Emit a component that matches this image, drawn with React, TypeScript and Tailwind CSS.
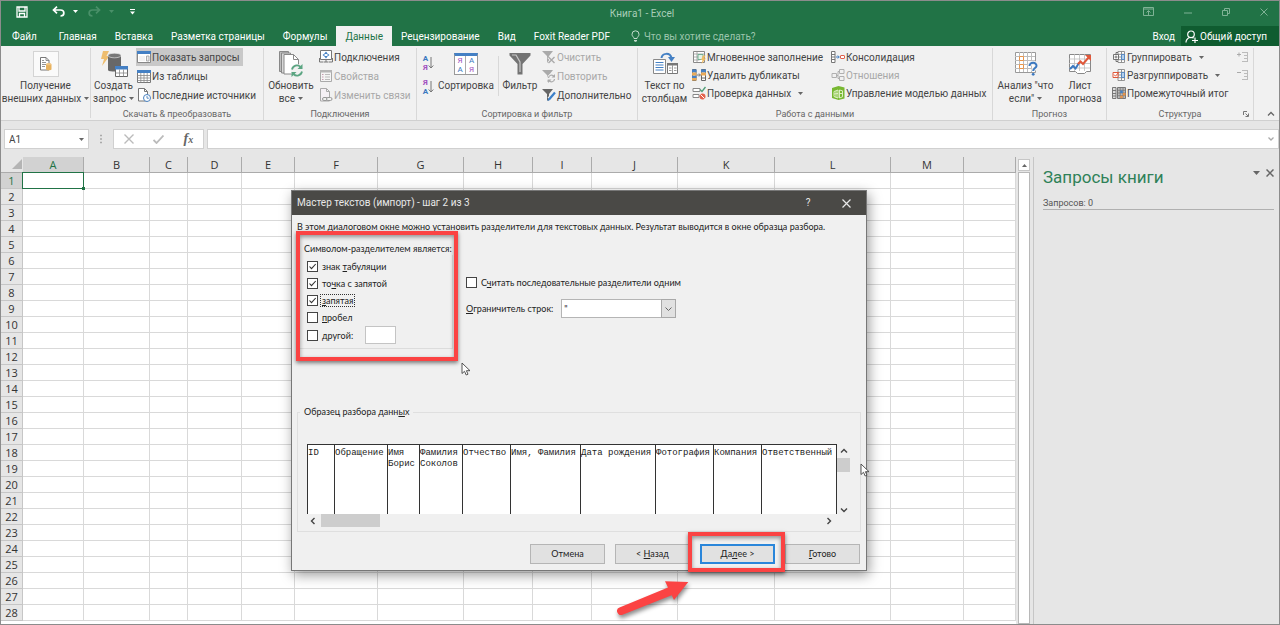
import type { ReactNode } from "react";

const UI = "font-['Roboto','Open_Sans',sans-serif]";

/* ---------- shared pieces ---------- */

function Caret({ className = "text-[#666]" }: { className?: string }) {
  return (
    <svg viewBox="0 0 5 3" className={`h-[3px] w-[5px] shrink-0 ${className}`} aria-hidden="true">
      <path d="M0 0h5L2.500 3z" fill="currentColor" />
    </svg>
  );
}

function Icon({ children, box = "0 0 14 14", className = "h-3.5 w-3.5" }: { children: ReactNode; box?: string; className?: string }) {
  return (
    <svg viewBox={box} className={`shrink-0 ${className}`} fill="none" aria-hidden="true">
      {children}
    </svg>
  );
}

function Small({ icon, children, caret, disabled, active }: { icon: ReactNode; children: ReactNode; caret?: boolean; disabled?: boolean; active?: boolean }) {
  return (
    <button
      type="button"
      disabled={disabled}
      className={`flex h-[18px] items-center gap-px px-px text-[10px] whitespace-nowrap ${active ? "bg-[#c8c8c8] pr-1" : ""} ${disabled ? "text-[#a8a8a8]" : "text-[#444]"}`}
    >
      {icon}
      <span>{children}</span>
      {caret && <span className="pl-1.5"><Caret /></span>}
    </button>
  );
}

function Big({ icon, line1, line2, caret, className }: { icon: ReactNode; line1: string; line2?: string; caret?: boolean; className: string }) {
  return (
    <button type="button" className={`flex shrink-0 flex-col items-center text-[10px] leading-[13px] whitespace-nowrap text-[#444] ${className}`}>
      <span className="flex h-[31px] items-center">{icon}</span>
      <span>{line1}</span>
      {line2 && (
        <span className="flex items-center gap-[3px]">
          {line2}
          {caret && <Caret />}
        </span>
      )}
    </button>
  );
}

function Group({ label, children, className }: { label?: string; children: ReactNode; className: string }) {
  return (
    <section className={`flex shrink-0 flex-col py-0.5 ${className}`}>
      <div className="flex flex-1 flex-col border-r border-[#d8d8d8]">
        <div className="flex h-[60px] items-start">{children}</div>
        {label && <h2 className="text-center text-[9px] leading-3 text-[#666]">{label}</h2>}
      </div>
    </section>
  );
}

/* ---------- ribbon icons ---------- */

const ExternalData = () => (
  <span className="flex h-[26px] w-[26px] items-center justify-center border border-[#d4d4d4] bg-[#fafafa]">
    <Icon box="0 0 12 14" className="h-3.5 w-3">
      <path d="M.5.5h5.500l3 3v9.500H.5z" fill="#fff" stroke="#777" />
      <path d="M6 .5v3h3M2 5.500h4M2 7.500h4M2 9.500h3M2 3.500h2" stroke="#777" strokeWidth=".8" />
      <path d="M6 7.300v5c0 1.300 5.500 1.300 5.500 0v-5" fill="#e8b25e" />
      <ellipse cx="8.750" cy="7.200" rx="2.750" ry="1.100" fill="#f0c480" />
    </Icon>
  </span>
);

const NewQuery = () => (
  <Icon box="0 0 28 28" className="h-7 w-7">
    <path d="M3 1h6L6.500 6H9.500L2 16l2-7H1z" fill="#eebd6e" />
    <path d="M8 6v14c0 2 13 2 13 0V6" fill="#686868" />
    <ellipse cx="14.500" cy="5.500" rx="6.500" ry="2.300" fill="#777" stroke="#eee" strokeWidth=".6" />
    <path d="M15.500 16.500h12v10h-12z" fill="#fff" stroke="#666" />
    <path d="M15 16h13v3.500H15z" fill="#4480c4" />
    <path d="M15.500 23h12M19.500 19.500v7M23.500 19.500v7" stroke="#888" strokeWidth=".8" />
  </Icon>
);

const ShowQueries = () => (
  <Icon>
    <path d="M.5 1.500h13v11H.5z" fill="#fff" stroke="#888" />
    <path d="M0 1h14v3H0z" fill="#4480c4" />
    <path d="M9.500 6h2.500v5H9.500z" fill="#eee" stroke="#999" strokeWidth=".8" />
    <path d="M2 6h6v5H2z" fill="#f3f3f3" />
  </Icon>
);

const FromTable = () => (
  <Icon>
    <path d="M.5 1.500h13v12H.5z" fill="#fff" stroke="#777" />
    <path d="M0 1h14v3H0z" fill="#4480c4" />
    <path d="M.5 6.500h13M.5 9h13M.5 11.500h13M3.800 4v9.500M7 4v9.500M10.200 4v9.500" stroke="#888" strokeWidth=".8" />
  </Icon>
);

const Recent = () => (
  <Icon>
    <path d="M1.500.5h6l3 3v9.500h-9z" fill="#fff" stroke="#777" />
    <path d="M7.500.5v3h3" stroke="#777" />
    <circle cx="10" cy="10" r="3.500" fill="#fff" stroke="#4a82c0" />
    <path d="M10 8v2.200h1.800" stroke="#4a82c0" strokeWidth=".9" />
  </Icon>
);

const Refresh = () => (
  <Icon box="0 0 26 28" className="h-7 w-[26px]">
    <path d="M1.500 1.500h9v20h-9z" fill="#bdbdbd" stroke="#888" />
    <path d="M3.500 3h9v20h-9z" fill="#d8d8d8" stroke="#888" />
    <path d="M6 4.500h9.500l5 5V24H6z" fill="#fff" stroke="#888" />
    <path d="M15.500 4.500v5h5" stroke="#888" />
    <circle cx="19" cy="20.500" r="6.500" fill="#f1f1f1" />
    <path d="M14 19.500a5 5 0 0 1 8.500-2.500M24 21.500a5 5 0 0 1-8.500 2.500" stroke="#5ba582" strokeWidth="1.800" />
    <path d="M24.500 14v5h-5zM13.500 27v-5h5z" fill="#5ba582" />
  </Icon>
);

const Connections = () => (
  <Icon>
    <path d="M1.500.5h11v9h-11z" fill="#fff" stroke="#777" />
    <path d="M7 1.500 9 4H5zM7 8.500 5 6h4zM3.500 5l2-1.500v3zM10.500 5l-2-1.500v3z" fill="#4480c4" />
    <path d="M.5 8v4h4M13.500 8v4h-4M5 12h4M7 10v2" stroke="#777" />
  </Icon>
);

const Props = () => (
  <Icon>
    <path d="M1.500 1.500h11v11h-11z" fill="#f4f4f4" stroke="#aaa" />
    <path d="M1 1h12v2.500H1z" fill="#b5b5b5" />
    <path d="M3 5.500h1.500M3 8h1.500M3 10.500h1.500" stroke="#c79bb0" />
    <path d="M6 5.500h5M6 8h5M6 10.500h5" stroke="#bbb" />
  </Icon>
);

const EditLinks = () => (
  <Icon>
    <path d="M1.500.5h6l3 3v9.500h-9z" fill="#f6f1f6" stroke="#aaa" />
    <path d="M7.500.5v3h3" stroke="#aaa" />
    <rect x="3.500" y="9.500" width="5" height="3" rx="1.500" fill="#f1f1f1" stroke="#999" />
    <rect x="7.500" y="9.500" width="5.500" height="3" rx="1.500" fill="#f1f1f1" stroke="#999" />
  </Icon>
);

function SortLetters({ top, bottom, topColor, bottomColor }: { top: string; bottom: string; topColor: string; bottomColor: string }) {
  return (
    <button type="button" className="flex items-center text-[8px] leading-[9px] font-bold" aria-label={`${top}${bottom}`}>
      <span className="flex flex-col">
        <span className={topColor}>{top}</span>
        <span className={bottomColor}>{bottom}</span>
      </span>
      <Icon box="0 0 6 14" className="h-3.5 w-1.5">
        <path d="M3 1v11M.7 9.500 3 12l2.300-2.500" stroke="#777" />
      </Icon>
    </button>
  );
}

const SortDialog = () => (
  <span className="grid h-[22px] w-6 grid-cols-2 border border-[#999] border-t-[3px] border-t-[#4480c4] bg-white text-center text-[8px] leading-[9px]">
    <span className="border-r border-[#aaa] text-[#a050c0]">Я</span>
    <span className="text-[#3b78c0]">А</span>
    <span className="border-r border-[#aaa] text-[#3b78c0]">А</span>
    <span className="text-[#a050c0]">Я</span>
  </span>
);

const Filter = () => (
  <Icon box="0 0 22 23" className="h-[23px] w-[22px]">
    <path d="M.5 1h21v2.500L13.500 12v10.500h-5V12L.5 3.500z" fill="#737373" />
    <path d="M3 3h4l4 7v10" stroke="#c8c8c8" strokeWidth="1.200" />
  </Icon>
);

const ClearFilter = () => (
  <Icon>
    <path d="M0 1h11L7 6v6.500H5V6z" fill="#aaa" />
    <path d="M6.500 7l6 6M12.500 7l-6 6" stroke="#f1f1f1" strokeWidth="3" />
    <path d="M6.500 7l6 6M12.500 7l-6 6" stroke="#aaa" strokeWidth="1.400" />
  </Icon>
);

const Reapply = () => (
  <Icon>
    <path d="M0 1h11L7 6v6.500H5V6z" fill="#aaa" />
    <circle cx="9.500" cy="9.500" r="4.500" fill="#f1f1f1" />
    <path d="M6.500 9a3 3 0 0 1 5.500-1.500M12.500 10a3 3 0 0 1-5.500 1.500" stroke="#aaa" strokeWidth="1.200" />
    <path d="M13 5v3.500H9.500zM6 14v-3.500h3.500z" fill="#aaa" />
  </Icon>
);

const Advanced = () => (
  <Icon>
    <path d="M0 1h11L7 6v6.500H5V6z" fill="#666" />
    <path d="m13 4-6 7" stroke="#f1f1f1" strokeWidth="4" />
    <path d="m13 4.500-6 7" stroke="#3b7fc8" strokeWidth="2.200" />
    <path d="m5.500 13 .8-2.500 1.700 1.400z" fill="#3b7fc8" />
  </Icon>
);

const TextToColumns = () => (
  <Icon box="0 0 26 24" className="h-6 w-[26px]">
    <path d="M1.500 7.500h12v14h-12z" fill="#fff" stroke="#888" />
    <path d="M3.500 10.500h8M3.500 13h8M3.500 15.500h8M3.500 18h8" stroke="#4480c4" />
    <path d="M15.500 11.500h10v10h-10z" fill="#fff" stroke="#777" />
    <path d="M15 11h11v2.500H15z" fill="#777" />
    <path d="M20.500 13v8M17 16h2.500M17 18.500h2.500M22 16h2.500M22 18.500h2.500" stroke="#999" />
    <path d="M9.500 6C10 1 18 0 19.500 6" stroke="#4480c4" strokeWidth="2" />
    <path d="M16 5h7l-3.500 5z" fill="#4480c4" />
  </Icon>
);

const FlashFill = () => (
  <Icon>
    <path d="M1.500 1.500h11v11h-11z" fill="#fff" stroke="#888" />
    <path d="M1.500 4h11M1.500 7h7M1.500 10h6M5 1.500v11" stroke="#999" strokeWidth=".8" />
    <path d="M6 4.500h5v5H6z" fill="#e4f1e8" stroke="#5ba582" strokeWidth=".8" />
    <path d="M11 5.500h2.500L12 8.500h2L9.500 14l1-4H9z" fill="#f0bc62" />
  </Icon>
);

const RemoveDup = () => (
  <Icon>
    <path d="M.5 1.500H4v11H.5zM9.500 1.500h4v11h-4z" fill="#fff" stroke="#666" />
    <path d="M0 1.500h4.500v3H0zM0 7.500h4.500v2.500H0z" fill="#4480c4" />
    <path d="M0 4.500h4.500v3H0zM0 10h4.500v2.500H0z" fill="#e8a958" />
    <path d="M9 1.500h5v3H9z" fill="#4480c4" />
    <path d="M9 4.500h5v3H9z" fill="#e8a958" />
    <path d="M9.500 10h4" stroke="#666" />
    <path d="M5 7h3M7 5.500 8.500 7 7 8.500" stroke="#555" strokeWidth=".8" />
  </Icon>
);

const Validation = () => (
  <Icon>
    <path d="M1 2.500h7v3H1zM1 8.500h6v3H1z" fill="#fff" stroke="#888" />
    <path d="m8 3.500 2 2 3.500-4.500" stroke="#4e9d78" strokeWidth="1.400" />
    <circle cx="10.500" cy="10.500" r="3" fill="#e4624c" />
    <path d="m8.500 8.500 4 4" stroke="#fff" />
  </Icon>
);

const Consolidate = () => (
  <Icon>
    <path d="M.5 1.500H4v11H.5zM.5 4.500H4M.5 7H4M.5 9.500H4" fill="#fff" stroke="#777" />
    <path d="M5 7h3M6.800 5.500 8.300 7 6.800 8.500" stroke="#3b78c0" />
    <rect x="9.500" y="5.500" width="4" height="3" rx=".5" fill="#fff" stroke="#e0604c" />
  </Icon>
);

const Relations = () => (
  <Icon>
    <path d="M1 5.500h4.500v4H1zM8.500 1.500H13v4H8.500zM8.500 8.500H13v4H8.500zM5.500 7.500H7M8.500 3.500H7v7h1.500" stroke="#b0b0b0" />
  </Icon>
);

const DataModel = () => (
  <Icon>
    <path d="M1 2 7.500 0 13.500 1.500v11L7.500 14 1 12z" fill="#78b832" />
    <path d="M3 5.500 7 4v8l-4-1.500zM3 8l4-.5M8.500 4l3 .8v6l-3 1.200zM8.500 7.500h3M5 5v6.500" stroke="#e6f5d0" strokeWidth=".9" />
  </Icon>
);

const WhatIf = () => (
  <Icon box="0 0 24 25" className="h-[25px] w-6">
    <path d="M1.500 1.500h20v20h-20z" fill="#fff" stroke="#999" />
    <path d="M1 5.500h20M1 9.500h20M1 13.500h20M1 17.500h20M5.500 1v20M9.500 1v20M13.500 1v20M17.500 1v20" stroke="#bdbdbd" />
    <path d="M5.500 5.500h4v4h-4zM5.500 13.500h4v4h-4z" fill="#fff" stroke="#e8944a" />
    <path d="M15.500 15c0-4.500 7.500-4 7 0-.2 2.200-3.300 2-3.300 5" stroke="#f1f1f1" strokeWidth="4" />
    <path d="M15.500 15c0-4.500 7.500-4 7 0-.2 2.200-3.300 2-3.300 5" stroke="#3b78c0" strokeWidth="2" />
    <circle cx="19.200" cy="23.300" r="1.400" fill="#3b78c0" />
  </Icon>
);

const Forecast = () => (
  <Icon box="0 0 24 22" className="h-[22px] w-6">
    <path d="M1.500 1.500h21v17h-4l-2 2h-7l-2-2h-6z" fill="#fff" stroke="#888" />
    <path d="M1 6h21M1 10.500h21M1 15h21M6.500 1v17M11.500 1v17M16.500 1v17" stroke="#bbb" strokeWidth=".8" />
    <path d="m2 16 3-3 2.500 2.500L11 10" stroke="#3b78c0" strokeWidth="2" />
    <path d="m10 11 2.500-2.500L15 11l6-7" stroke="#e0583a" strokeWidth="2" />
    <path d="M17 2h6v6z" fill="#e0583a" />
  </Icon>
);

function GroupIcon({ mark }: { mark: "add" | "remove" }) {
  return (
    <Icon>
      <path d="M6 1.500h6.500v11H6zM6 4.300h6.500M6 7h6.500M6 9.700h6.500M9.500 1.500v11" fill="#fff" stroke="#888" strokeWidth=".9" />
      <path d="M9.500 4.500h3v5h-3z" fill="#b6cfe8" stroke="#4480c4" strokeWidth=".8" />
      {mark === "add" ? (
        <path d="M4 2.500H6M4 11.500H6M4 2.500v2M4 9v2.500M1.500 4.500h5v5h-5zM2.500 7h3M4 5.500v3" fill="#fff" stroke="#666" strokeWidth=".9" />
      ) : (
        <>
          <path d="M1 4.500h5v5H1z" fill="#fff" stroke="#e0583a" />
          <path d="m2 6.500 1.500 1.700L7 4" stroke="#e0583a" />
        </>
      )}
    </Icon>
  );
}

const Subtotal = () => (
  <Icon>
    <path d="M.5 1.500H4v11H.5z" fill="#ddd" stroke="#777" />
    <path d="M.5 4.500H4M.5 7.500H4M.5 10H4" stroke="#777" />
    <path d="M5.500 1.500h8v11h-8z" fill="#bbb" stroke="#777" />
    <path d="M5.500 4.300h8M5.500 7h8M5.500 9.700h8M8.200 1.500v11M11 1.500v11" stroke="#777" strokeWidth=".8" />
    <path d="M8.200 4.500h2.500V7H8.200z" fill="#4480c4" />
    <path d="M11 7h2.500v2.500H11zM8.200 9.700h2.500v2.500H8.200z" fill="#e8944a" />
  </Icon>
);

function Detail({ plus }: { plus?: boolean }) {
  return (
    <Icon box="0 0 12 12" className="h-3 w-3">
      <path d={plus ? "M0 3.500h4M2 1.500v4" : "M0 3.500h4"} stroke="#aaa" />
      <path d="M5 1.500h6M7 4.500h4M7 7.500h4M5 10.500h6M10.500 1v10" stroke="#bbb" />
    </Icon>
  );
}

/* ---------- window chrome ---------- */

function TitleBar() {
  return (
    <header className="flex h-[25px] items-center bg-[#217346] text-white">
      <div className="flex flex-1 items-center pb-1 pl-[15px]">
        <button type="button" aria-label="Сохранить">
          <Icon box="0 0 12 12" className="h-3 w-3">
            <path d="M1 1h10v10H1zM3 1v4h6V1M3.500 11V7.500h5V11" stroke="#fff" strokeWidth="1.300" />
          </Icon>
        </button>
        <button type="button" aria-label="Отменить" className="ml-6 flex items-center gap-2">
          <Icon box="0 0 13 11" className="h-[11px] w-[13px]">
            <path d="M2 4h6.500c4.500 0 4.500 6 0 6M5 .7 1.500 4 5 7.300" stroke="#fff" strokeWidth="1.700" />
          </Icon>
          <Caret className="text-white" />
        </button>
        <button type="button" aria-label="Вернуть" disabled className="ml-2.5 flex items-center gap-2">
          <Icon box="0 0 13 11" className="h-[11px] w-[13px]">
            <path d="M11 4H4.500C0 4 0 10 4.500 10M8 .7 11.500 4 8 7.300" stroke="#4a9069" strokeWidth="1.700" />
          </Icon>
          <Caret className="text-[#4a9069]" />
        </button>
        <button type="button" aria-label="Настройка панели" className="ml-4">
          <Icon box="0 0 5 6" className="h-1.5 w-[5px]">
            <path d="M0 .5h5" stroke="#fff" />
            <path d="M0 2.500h5L2.500 5.500z" fill="#fff" />
          </Icon>
        </button>
      </div>
      <h1 className="text-[10px] text-[#a9cdb8]">Книга1 - Excel</h1>
      <div className="flex flex-1 items-center justify-end gap-[30px] pr-[11px] pb-1 text-[#7fb295]">
        <button type="button" aria-label="Параметры ленты">
          <Icon box="0 0 11 9" className="h-[9px] w-[11px]">
            <path d="M.5.5h10v8H.5zM.5 2h10M5.500 8V4M3.500 5.500l2-2 2 2" stroke="currentColor" />
          </Icon>
        </button>
        <button type="button" aria-label="Свернуть">
          <Icon box="0 0 8 9" className="h-[9px] w-2">
            <path d="M0 6h8" stroke="currentColor" />
          </Icon>
        </button>
        <button type="button" aria-label="Восстановить">
          <Icon box="0 0 8 8" className="h-2 w-2">
            <path d="M.5 2.500h5v5h-5zM2.500 2.500v-2h5v5h-2" stroke="currentColor" />
          </Icon>
        </button>
        <button type="button" aria-label="Закрыть">
          <Icon box="0 0 8 8" className="h-2 w-2">
            <path d="m.5.5 7 7M7.500.5l-7 7" stroke="currentColor" />
          </Icon>
        </button>
      </div>
    </header>
  );
}

const TABS = ["Файл", "Главная", "Вставка", "Разметка страницы", "Формулы", "Данные", "Рецензирование", "Вид", "Foxit Reader PDF"];

function Tabs() {
  return (
    <nav className="flex h-5 items-stretch bg-[#217346] text-[10px] whitespace-nowrap text-white">
      {TABS.map((t) => (
        <a
          key={t}
          href="#"
          className={`flex items-center px-[9px] ${t === "Данные" ? "bg-[#f1f1f1] text-[#217346]" : t === "Файл" ? "mr-1 ml-0.5" : ""}`}
        >
          {t}
        </a>
      ))}
      <button type="button" className="ml-3 flex items-center gap-1 text-[#9cc5ad]">
        <Icon box="0 0 9 12" className="h-3 w-[9px]">
          <path d="M3 8.500C3 7 1 6.500 1 4.300a3.500 3.500 0 0 1 7 0C8 6.500 6 7 6 8.500zM3 10.500h3M3.500 11.700h2" stroke="#c5ddcf" />
        </Icon>
        Что вы хотите сделать?
      </button>
      <div className="ml-auto flex">
        <button type="button" className="px-1.5">Вход</button>
        <button type="button" className="flex w-[98px] items-center gap-0.5 bg-[#0f5c30] pl-1">
          <Icon box="0 0 13 13" className="h-[13px] w-[13px]">
            <circle cx="6" cy="4.300" r="3.300" stroke="#fff" strokeWidth="1.200" />
            <path d="M1 12.500C1 10 2.500 8.500 4.500 7.500M7.500 7.500l1 .8M7 10.500h6M10 7.500v5.500" stroke="#fff" strokeWidth="1.200" />
          </Icon>
          Общий доступ
        </button>
      </div>
    </nav>
  );
}

function Ribbon() {
  return (
    <div className="flex h-[75px] border-b border-[#d0d0d0] bg-[#f1f1f1]">
      <Group className="w-[90px]">
        <Big className="w-full" icon={<ExternalData />} line1="Получение" line2="внешних данных" caret />
      </Group>
      <Group className="w-[173px]" label="Скачать & преобразовать">
        <Big className="w-[45px]" icon={<NewQuery />} line1="Создать" line2="запрос" caret />
        <div className="flex flex-col items-start gap-px">
          <Small active icon={<ShowQueries />}>Показать запросы</Small>
          <Small icon={<FromTable />}>Из таблицы</Small>
          <Small icon={<Recent />}>Последние источники</Small>
        </div>
      </Group>
      <Group className="w-[153px]" label="Подключения">
        <Big className="w-[54px]" icon={<Refresh />} line1="Обновить" line2="все" caret />
        <div className="flex flex-col items-start gap-px">
          <Small icon={<Connections />}>Подключения</Small>
          <Small disabled icon={<Props />}>Свойства</Small>
          <Small disabled icon={<EditLinks />}>Изменить связи</Small>
        </div>
      </Group>
      <Group className="w-[221px]" label="Сортировка и фильтр">
        <div className="flex w-[17px] flex-col items-end gap-1.5 pt-1.5">
          <SortLetters top="А" bottom="Я" topColor="text-[#3b78c0]" bottomColor="text-[#a050c0]" />
          <SortLetters top="Я" bottom="А" topColor="text-[#a050c0]" bottomColor="text-[#3b78c0]" />
        </div>
        <Big className="w-16" icon={<SortDialog />} line1="Сортировка" />
        <div className="mt-2 h-10 w-px bg-[#d8d8d8]" />
        <Big className="w-[42px]" icon={<Filter />} line1="Фильтр" />
        <div className="flex flex-col items-start gap-px">
          <Small disabled icon={<ClearFilter />}>Очистить</Small>
          <Small disabled icon={<Reapply />}>Повторить</Small>
          <Small icon={<Advanced />}>Дополнительно</Small>
        </div>
      </Group>
      <Group className="w-[355px]" label="Работа с данными">
        <Big className="w-[53px]" icon={<TextToColumns />} line1="Текст по" line2="столбцам" />
        <div className="flex w-[139px] flex-col items-start">
          <Small icon={<FlashFill />}>Мгновенное заполнение</Small>
          <Small icon={<RemoveDup />}>Удалить дубликаты</Small>
          <Small caret icon={<Validation />}>Проверка данных</Small>
        </div>
        <div className="flex flex-col items-start">
          <Small icon={<Consolidate />}>Консолидация</Small>
          <Small disabled icon={<Relations />}>Отношения</Small>
          <Small icon={<DataModel />}>Управление моделью данных</Small>
        </div>
      </Group>
      <Group className="w-[114px]" label="Прогноз">
        <Big className="w-[65px]" icon={<WhatIf />} line1={'Анализ "что'} line2={'если"'} caret />
        <Big className="w-11" icon={<Forecast />} line1="Лист" line2="прогноза" />
      </Group>
      <Group className="w-[147px]" label="Структура">
        <div className="flex flex-1 flex-col items-start pl-1">
          <Small caret icon={<GroupIcon mark="add" />}>Группировать</Small>
          <Small caret icon={<GroupIcon mark="remove" />}>Разгруппировать</Small>
          <Small icon={<Subtotal />}>Промежуточный итог</Small>
        </div>
        <div className="flex flex-col items-end gap-1.5 pt-[3px] pr-1">
          <Detail plus />
          <Detail />
          <button type="button" aria-label="Параметры структуры" className="mt-6">
            <Icon box="0 0 6 6" className="h-1.5 w-1.5">
              <path d="M.5 4V.5H4M2.500 2.500 5 5M5.500 2.500v3h-3" stroke="#777" />
            </Icon>
          </button>
        </div>
      </Group>
      <div className="flex flex-1 items-end justify-end pr-1 pb-1">
        <button type="button" aria-label="Свернуть ленту">
          <Icon box="0 0 8 5" className="h-[5px] w-2">
            <path d="m1 4.500 3-3 3 3" stroke="#666" strokeWidth="1.300" />
          </Icon>
        </button>
      </div>
    </div>
  );
}

function FormulaBar() {
  return (
    <div className="flex h-9 items-center bg-[#e6e6e6] pl-[3px] text-[10px] text-[#444]">
      <label className="flex h-5 w-[85px] items-center border border-[#d0d0d0] bg-white pr-1">
        <input aria-label="Имя" defaultValue="A1" className="min-w-0 flex-1 bg-transparent pl-1 outline-none" />
        <Caret />
      </label>
      <Icon box="0 0 2 10" className="mx-[11px] h-2.5 w-0.5">
        <path d="M0 1.500h2M0 5h2M0 8.500h2" stroke="#aaa" strokeWidth="1.500" />
      </Icon>
      <div className="flex h-5 w-[91px] items-center justify-around border border-[#d0d0d0] bg-white">
        <button type="button" aria-label="Отмена ввода">
          <Icon box="0 0 10 10" className="h-2.5 w-2.5"><path d="m.5.5 9 9M9.500.5l-9 9" stroke="#bbb" strokeWidth="1.400" /></Icon>
        </button>
        <button type="button" aria-label="Ввод">
          <Icon box="0 0 11 9" className="h-[9px] w-[11px]"><path d="m.5 5 3 3 7-7.500" stroke="#bbb" strokeWidth="1.800" /></Icon>
        </button>
        <button type="button" className="font-['Liberation_Serif',serif] text-[14px] leading-4 font-bold text-[#666] italic">
          f<span className="text-[10px]">x</span>
        </button>
      </div>
      <label className="ml-[3px] flex h-5 flex-1 items-center border border-[#d0d0d0] bg-white pr-1">
        <input aria-label="Строка формул" className="min-w-0 flex-1 outline-none" />
        <Icon box="0 0 6 4" className="h-1 w-1.5"><path d="m.5.5 2.500 2.500L5.500.5" stroke="#aaa" strokeWidth="1.300" /></Icon>
      </label>
    </div>
  );
}

const COLS: [string, string][] = [
  ["A", "w-[61px]"], ["B", "w-[66px]"], ["C", "w-[38px]"], ["D", "w-[54px]"], ["E", "w-[53px]"],
  ["F", "w-[83px]"], ["G", "w-[86px]"], ["H", "w-[69px]"], ["I", "w-[59px]"], ["J", "w-[86px]"],
  ["K", "w-[97px]"], ["L", "w-[116px]"], ["M", "w-[73px]"], ["", ""],
];
const ROWS = Array.from({ length: 28 }, (_, i) => i + 1);

function Sheet() {
  return (
    <table className="w-full table-fixed border-separate border-spacing-0 bg-white font-['Open_Sans','Noto_Sans',sans-serif] text-[11px] leading-[15px] text-[#333]">
      <colgroup>
        <col className="w-[22px]" />
        {COLS.map(([c, w]) => <col key={c} className={w} />)}
      </colgroup>
      <thead>
        <tr className="h-4">
          <th className="border-b border-[#ababab] bg-[#e6e6e6] p-0">
            <Icon box="0 0 11 11" className="ml-auto h-[11px] w-[11px]"><path d="M10 0v10H0z" fill="#b4b4b4" /></Icon>
          </th>
          {COLS.map(([c]) => (
            <th key={c} className={`border-r border-b border-[#ababab] p-0 font-normal ${c === "A" ? "bg-[#d2d2d2] text-[#217346]" : "bg-[#e6e6e6]"}`}>{c}</th>
          ))}
        </tr>
      </thead>
      <tbody>
        {ROWS.map((r) => (
          <tr key={r} className="h-4">
            <th className={`border-r border-b border-[#c6c6c6] p-0 font-normal ${r === 1 ? "bg-[#d2d2d2] text-[#217346]" : "bg-[#e6e6e6]"}`}>{r}</th>
            {COLS.map(([c]) => (
              <td key={c} className="border-r border-b border-[#d9d9d9] p-0">
                {r === 1 && c === "A" && (
                  <div className="relative h-[15px]">
                    <div className="absolute -inset-px border border-[#217346]" />
                    <div className="absolute -right-0.5 -bottom-0.5 h-[3px] w-[3px] bg-[#217346]" />
                  </div>
                )}
              </td>
            ))}
          </tr>
        ))}
      </tbody>
    </table>
  );
}

function QueriesPane() {
  return (
    <aside className="w-[246px] shrink-0 border-l border-[#c6c6c6] bg-[#e6e6e6] pt-2 pr-[5px] pl-[9px]">
      <div className="flex items-start">
        <h2 className="flex-1 text-[17px] leading-6 text-[#2f8158]">Запросы книги</h2>
        <button type="button" aria-label="Параметры области" className="pt-1.5">
          <Icon box="0 0 7 4" className="h-1 w-[7px]"><path d="M0 0h7L3.500 4z" fill="#666" /></Icon>
        </button>
        <button type="button" aria-label="Закрыть область" className="pt-1 pl-1.5">
          <Icon box="0 0 8 8" className="h-2 w-2"><path d="m.5.5 7 7M7.500.5l-7 7" stroke="#666" strokeWidth="1.500" /></Icon>
        </button>
      </div>
      <p className="mt-2 border-b border-[#b0b0b0] text-[9px] leading-3 text-[#555]">Запросов: 0</p>
    </aside>
  );
}

/* ---------- import wizard ---------- */

function Check({ id, checked, children, focus }: { id: string; checked?: boolean; children: ReactNode; focus?: boolean }) {
  return (
    <div className="flex h-[17px] items-center">
      <span className="relative flex">
        <input id={id} type="checkbox" defaultChecked={checked} className="peer h-[11px] w-[11px] appearance-none border border-[#444] bg-white" />
        <svg viewBox="0 0 11 11" className="pointer-events-none absolute inset-0 hidden h-[11px] w-[11px] peer-checked:block" fill="none">
          <path d="m2.500 5.500 2 2.200L8.700 3" stroke="#333" strokeWidth="1.100" />
        </svg>
      </span>
      <label htmlFor={id} className={`ml-0.5 border border-dotted px-px leading-[11px] ${focus ? "border-[#333]" : "border-transparent"}`}>{children}</label>
    </div>
  );
}

const PREVIEW: [string, string, string][] = [
  ["ID", "", "w-[27px]"], ["Обращение", "", "w-[53px]"], ["Имя", "Борис", "w-8"], ["Фамилия", "Соколов", "w-[43px]"],
  ["Отчество", "", "w-12"], ["Имя, Фамилия", "", "w-[70px]"], ["Дата рождения", "", "w-[75px]"], ["Фотография", "", "w-[58px]"],
  ["Компания", "", "w-12"], ["Ответственный", "", "w-[75px]"],
];

function Chevron({ d }: { d: string }) {
  return <Icon box="0 0 8 8" className="h-2 w-2"><path d={d} stroke="#444" strokeWidth="1.400" /></Icon>;
}

function DlgButton({ children, primary }: { children: ReactNode; primary?: boolean }) {
  return (
    <button type="button" className={`h-5 w-[75px] bg-[#e1e1e1] ${primary ? "border-2 border-[#2a86da]" : "border border-[#b5b5b5]"}`}>
      {children}
    </button>
  );
}

function Wizard() {
  return (
    <div role="dialog" aria-label="Мастер текстов (импорт)" className="absolute top-[190px] left-[291px] flex h-[381px] w-[576px] flex-col border border-[#777] bg-[#f0f0f0] font-['Lato','Roboto',sans-serif] text-[9px] leading-3 whitespace-nowrap text-[#222] shadow-[2px_4px_12px_rgba(0,0,0,0.4)]">
      <div className="flex h-6 shrink-0 items-center bg-[#4a4946] pl-[5px] font-['Roboto',sans-serif] text-[10px] text-[#e8e8e8]">
        <h2 className="flex-1">Мастер текстов (импорт) - шаг 2 из 3</h2>
        <button type="button" aria-label="Справка" className="w-8">?</button>
        <button type="button" aria-label="Закрыть" className="mr-[15px] ml-[18px]">
          <Icon box="0 0 9 9" className="h-[9px] w-[9px]"><path d="m.5.5 8 8M8.500.5l-8 8" stroke="#e8e8e8" strokeWidth="1.200" /></Icon>
        </button>
      </div>
      <p className="pt-1.5 pl-[5px]">В этом диалоговом окне можно установить разделители для текстовых данных. Результат выводится в окне образца разбора.</p>
      <div className="mt-2.5 flex">
        <fieldset className="ml-[5px] w-[156px] min-w-0 border border-[#dcdcdc] pb-1 pl-[9px]">
          <legend className="-ml-[7px] px-1">Символом-разделителем является:</legend>
          <div className="pt-[3px]">
            <Check id="tab" checked>знак <u>т</u>абуляции</Check>
            <Check id="semi" checked>то<u>ч</u>ка с запятой</Check>
            <Check id="comma" checked focus><u>з</u>апятая</Check>
            <Check id="space"><u>п</u>робел</Check>
            <div className="flex items-center">
              <Check id="other"><u>д</u>ругой:</Check>
              <input aria-label="Другой разделитель" className="ml-2.5 h-[18px] w-[31px] border border-[#c4c4c4] bg-white" />
            </div>
          </div>
        </fieldset>
        <div className="flex flex-col gap-2 pt-[31px] pl-[13px]">
          <Check id="merge">С<u>ч</u>итать последовательные разделители одним</Check>
          <div className="flex items-center gap-2">
            <label htmlFor="qualifier"><u>О</u>граничитель строк:</label>
            <span className="relative flex">
              <select id="qualifier" className="h-[19px] w-[115px] appearance-none border border-[#b5b5b5] bg-white pl-0.5">
                <option>"</option>
              </select>
              <span className="pointer-events-none absolute inset-y-0 right-0 flex w-[15px] items-center justify-center border border-[#a8a8a8] bg-[#e1e1e1]">
                <Icon box="0 0 7 4" className="h-1 w-[7px]"><path d="m.5.5 3 3 3-3" stroke="#666" /></Icon>
              </span>
            </span>
          </div>
        </div>
      </div>
      <fieldset className="mx-[5px] mt-auto border border-[#dfdfdf] pb-1 pl-[9px]">
        <legend className="-ml-[7px] px-1">Образец разбора данн<u>ы</u>х</legend>
        <div className="flex pt-[26px]">
          <table className="h-[70px] w-[530px] table-fixed border-collapse border-t border-[#333] bg-white font-['Liberation_Mono',monospace] leading-[11px]">
            <colgroup>
              {PREVIEW.map(([h, , w]) => <col key={h} className={w} />)}
            </colgroup>
            <tbody>
              <tr>
                {PREVIEW.map(([h, v]) => (
                  <td key={h} className="border-x border-[#333] p-0 pt-[3px] align-top">
                    {h}<br />{v}
                  </td>
                ))}
              </tr>
            </tbody>
          </table>
          <div className="flex w-[13px] flex-col items-center gap-[3px] pt-[3px]">
            <Chevron d="m1 5.500 3-3 3 3" />
            <div className="h-3.5 w-[13px] bg-[#cdcdcd]" />
            <div className="flex-1" />
            <Chevron d="m1 2.500 3 3 3-3" />
          </div>
        </div>
        <div className="flex h-[13px] w-[530px] items-center gap-1 pr-1 pl-0.5">
          <Chevron d="m5.500 1-3 3 3 3" />
          <div className="h-[13px] w-[59px] bg-[#cdcdcd]" />
          <div className="flex-1" />
          <Chevron d="m2.500 1 3 3-3 3" />
        </div>
      </fieldset>
      <div className="flex justify-end gap-2.5 pt-3 pr-1.5 pb-1.5">
        <DlgButton>Отмена</DlgButton>
        <DlgButton>&lt; <u>Н</u>азад</DlgButton>
        <DlgButton primary>Да<u>л</u>ее &gt;</DlgButton>
        <DlgButton><u>Г</u>отово</DlgButton>
      </div>
    </div>
  );
}

function Pointer({ className }: { className: string }) {
  return (
    <svg viewBox="0 0 10 14" className={`absolute h-3.5 w-2.5 ${className}`} aria-hidden="true">
      <path d="M1 1v10.500l2.500-2.200L5.200 13l1.800-.8-1.600-3.500H9z" fill="#fff" stroke="#444" strokeWidth=".9" />
    </svg>
  );
}

export default function App() {
  return (
    <div className={`relative flex min-h-screen flex-col overflow-hidden border border-[#8c8c8c] bg-[#e6e6e6] ${UI}`}>
      <TitleBar />
      <Tabs />
      <Ribbon />
      <FormulaBar />
      <div className="flex flex-1">
        <div className="min-w-0 flex-1 bg-white"><Sheet /></div>
        <div className="flex w-[17px] shrink-0 flex-col pt-0.5 pr-[3px] pl-0.5">
          <button type="button" aria-label="Прокрутить вверх" className="flex h-3 items-center justify-center border border-[#c6c6c6] bg-white"><Icon box="0 0 5 3" className="h-[3px] w-[5px]"><path d="M0 3h5L2.500 0z" fill="#666" /></Icon></button>
          <div className="mt-px flex-1 border border-[#b8b8b8] bg-white" />
        </div>
        <QueriesPane />
      </div>

      <div className="absolute -top-px -left-px">
        <Wizard />
        <div className="absolute top-[231px] left-[296px] h-[130px] w-[162px] border-4 border-[#fb4343] shadow-[0_2px_4px_rgba(0,0,0,0.5),inset_0_2px_4px_rgba(0,0,0,0.4)]" />
        <div className="absolute top-[532px] left-[688px] h-10 w-[97px] border-4 border-[#fb4343] shadow-[0_2px_4px_rgba(0,0,0,0.5),inset_0_2px_4px_rgba(0,0,0,0.4)]" />
        <svg viewBox="0 0 80 44" className="absolute top-[576px] left-[614px] h-11 w-20 drop-shadow-[1px_3px_2px_rgba(0,0,0,0.45)]" aria-hidden="true">
          <path d="M5.500 31.500 54 11.500 51 5.300 74.300 6 60 24l-2.300-4.700L8.500 38.700a3.900 3.900 0 0 1-3-7.200z" fill="#fb4343" />
        </svg>
        <Pointer className="top-[362px] left-[461px]" />
        <Pointer className="top-[463px] left-[860px]" />
      </div>
    </div>
  );
}
